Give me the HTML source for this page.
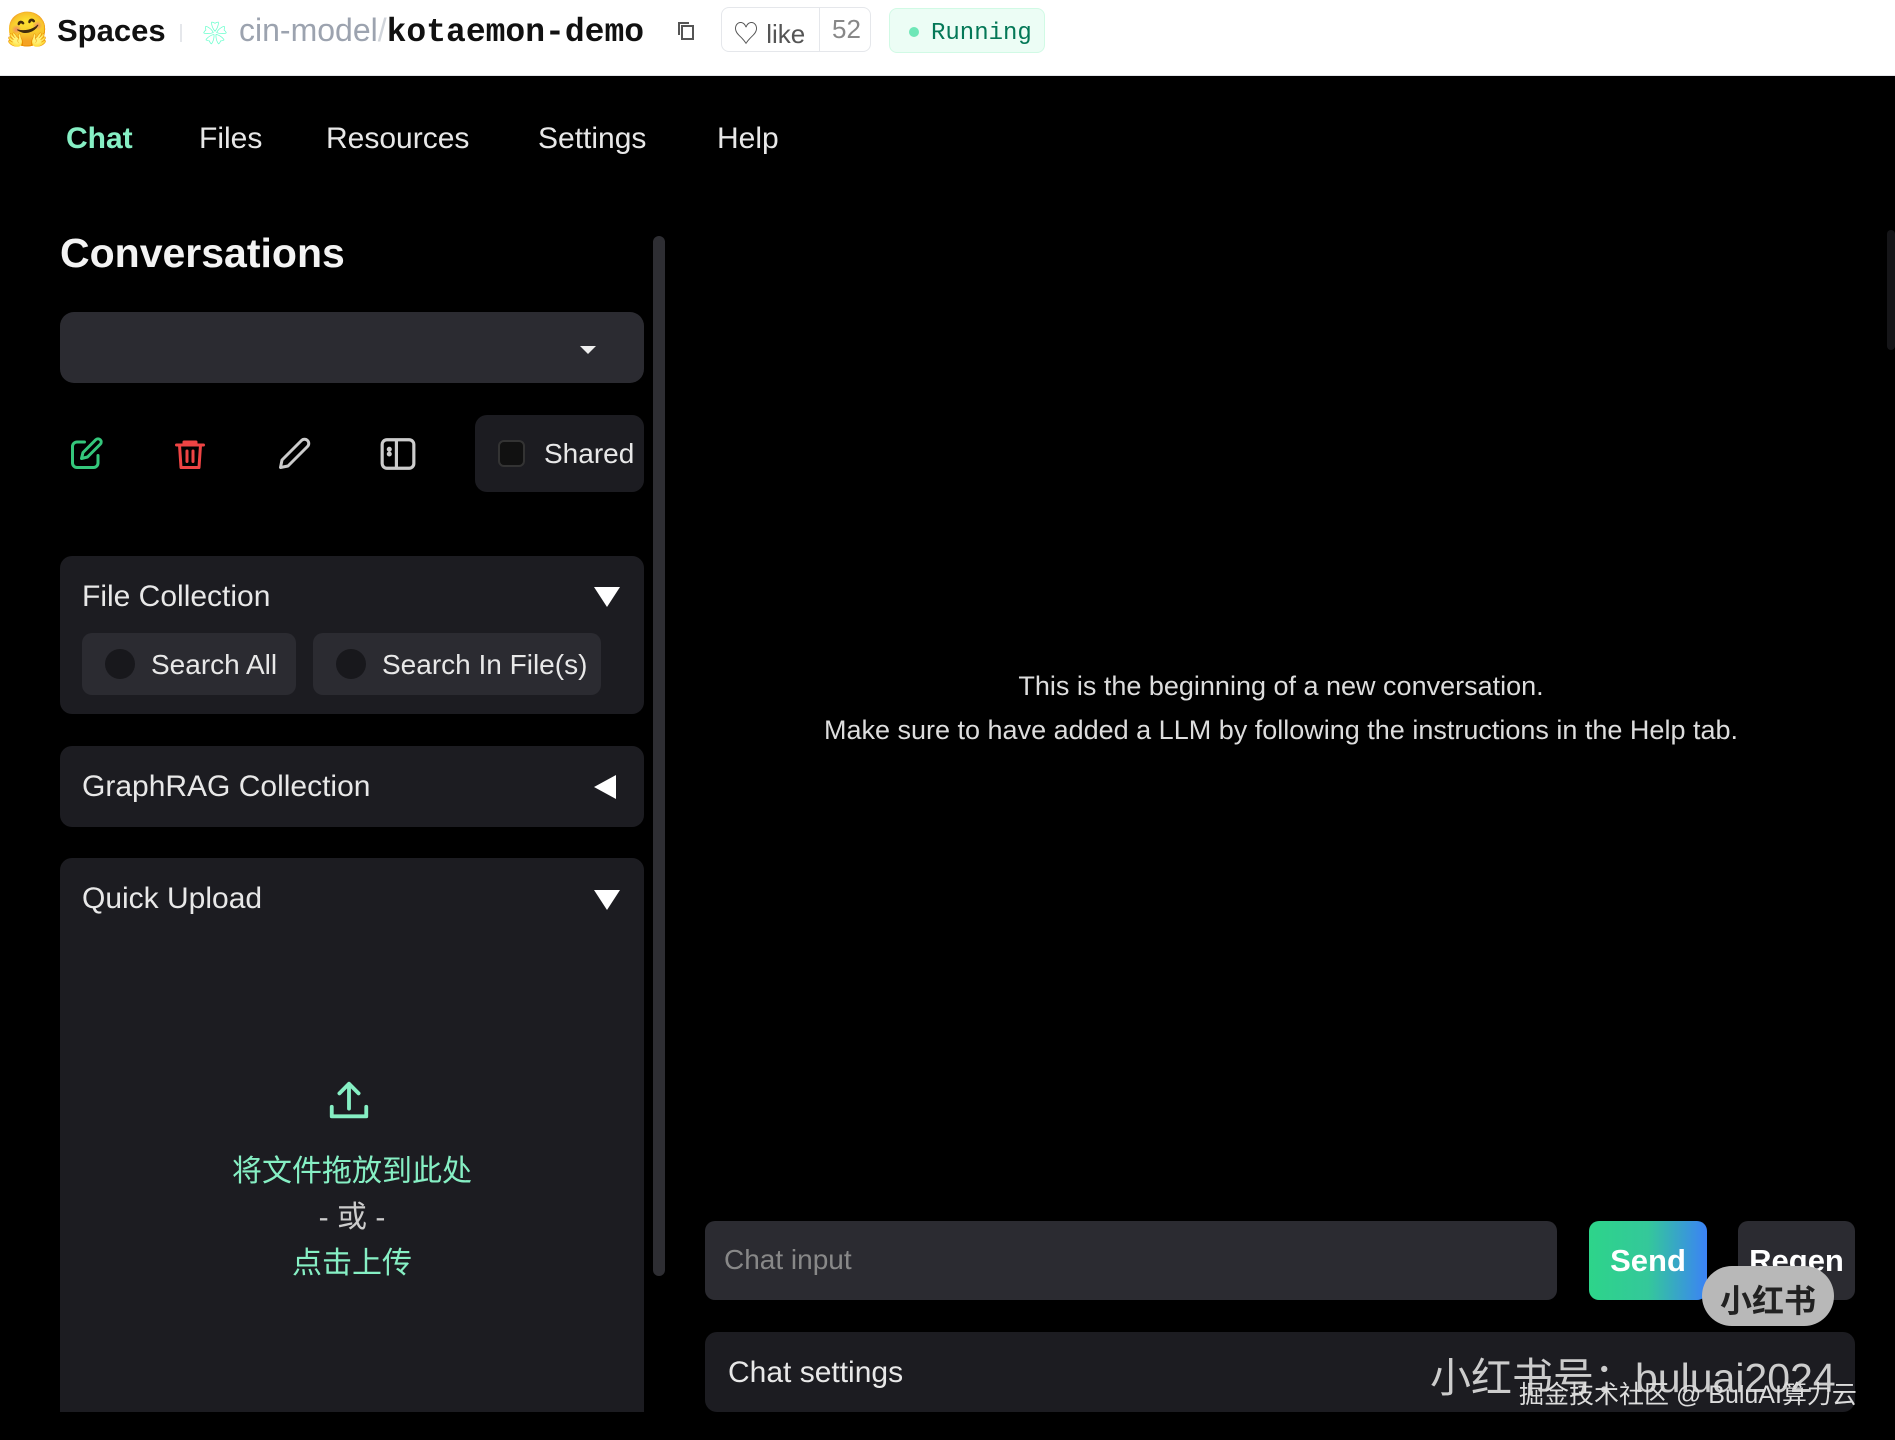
<!DOCTYPE html>
<html><head><meta charset="utf-8"><style>
*{box-sizing:border-box;margin:0;padding:0}
body{width:1895px;height:1440px;background:#000;font-family:"Liberation Sans","Noto Sans CJK SC",sans-serif;color:#e8e8e8;position:relative;overflow:hidden}
.a{position:absolute}
.hdr{left:0;top:0;width:1895px;height:76px;background:#fff;border-bottom:1px solid #e5e7eb}
.t{white-space:nowrap}
.panel{background:#1c1c21;border-radius:12px}
.btn2{background:#2b2b31;border-radius:10px}
</style></head><body>
<div class="a hdr">
  <div class="a t" style="left:6px;top:10px;font-size:34px">🤗</div>
  <div class="a t" style="left:57px;top:13px;font-size:31px;font-weight:bold;color:#111">Spaces</div>
  <div class="a" style="left:180px;top:24px;width:2px;height:18px;background:#e5e7eb"></div>
  <div class="a t" style="left:203px;top:14px;font-size:24px;color:#6fc">❀</div>
  <div class="a t" style="left:239px;top:12px;font-size:32px;color:#9ca3af">cin-model<span style="color:#d1d5db">/</span><span style="font-family:'Liberation Mono',monospace;font-weight:bold;color:#111;font-size:33px">kotaemon-demo</span></div>
  <svg class="a" style="left:676px;top:20px" width="20" height="22" viewBox="0 0 20 22" fill="none" stroke="#555" stroke-width="2"><rect x="6" y="6" width="11" height="13"/><path d="M3 15V3h10"/></svg>
  <div class="a" style="left:721px;top:7px;width:150px;height:45px;border:1px solid #e5e7eb;border-radius:8px"></div>
  <div class="a" style="left:819px;top:7px;width:1px;height:45px;background:#e5e7eb"></div>
  <div class="a t" style="left:733px;top:14px;font-size:26px;color:#555">♡ like</div>
  <div class="a t" style="left:832px;top:14px;font-size:26px;color:#888">52</div>
  <div class="a" style="left:889px;top:8px;width:156px;height:45px;background:#ecfdf5;border:1px solid #d1fae5;border-radius:8px"></div>
  <div class="a" style="left:909px;top:27px;width:10px;height:10px;border-radius:5px;background:#6ee7b7"></div>
  <div class="a t" style="left:931px;top:20px;font-size:24px;font-family:'Liberation Mono',monospace;color:#047857">Running</div>
</div>

<div class="a t" style="left:66px;top:122px;font-size:30px;color:#86efc4;font-weight:bold">Chat</div>
<div class="a t" style="left:199px;top:122px;font-size:30px">Files</div>
<div class="a t" style="left:326px;top:122px;font-size:30px">Resources</div>
<div class="a t" style="left:538px;top:122px;font-size:30px">Settings</div>
<div class="a t" style="left:717px;top:122px;font-size:30px">Help</div>

<div class="a t" style="left:60px;top:230px;font-size:41px;font-weight:bold;color:#f3f3f3">Conversations</div>
<div class="a btn2" style="left:60px;top:312px;width:584px;height:71px;border-radius:14px"></div>
<div class="a" style="left:580px;top:346px;width:0;height:0;border-left:8px solid transparent;border-right:8px solid transparent;border-top:8px solid #eee"></div>
<div class="a" style="left:653px;top:236px;width:12px;height:1040px;background:#2e2e33;border-radius:6px"></div>

<svg class="a" style="left:68px;top:436px" width="36" height="36" viewBox="0 0 24 24" fill="none" stroke="#34c77b" stroke-width="2" stroke-linecap="round" stroke-linejoin="round"><path d="M11 4H6a3 3 0 0 0-3 3v11a3 3 0 0 0 3 3h11a3 3 0 0 0 3-3v-5"/><path d="M18.5 2.5a2.1 2.1 0 0 1 3 3L13 14l-4 1 1-4z"/></svg>
<svg class="a" style="left:172px;top:435px" width="36" height="38" viewBox="0 0 24 24" fill="none" stroke="#ef4444" stroke-width="2" stroke-linecap="round" stroke-linejoin="round"><path d="M3 6h18M8 6V4h8v2M5 6l1 15h12l1-15M10 10v7M14 10v7"/></svg>
<svg class="a" style="left:276px;top:436px" width="36" height="36" viewBox="0 0 24 24" fill="none" stroke="#ccc" stroke-width="2" stroke-linecap="round" stroke-linejoin="round"><path d="M17 3a2.8 2.8 0 0 1 4 4L8 20l-5 1 1-5z"/></svg>
<svg class="a" style="left:379px;top:436px" width="38" height="36" viewBox="0 0 24 22" fill="none" stroke="#ccc" stroke-width="2"><rect x="2" y="2" width="20" height="18" rx="3"/><path d="M11 2v18"/><circle cx="6.5" cy="8" r=".6" fill="#ccc"/><circle cx="6.5" cy="11" r=".6" fill="#ccc"/></svg>
<div class="a btn2" style="left:475px;top:415px;width:169px;height:77px;background:#1c1c21;border-radius:12px"></div>
<div class="a" style="left:498px;top:440px;width:27px;height:27px;border:2px solid #333;border-radius:6px;background:#111"></div>
<div class="a t" style="left:544px;top:438px;font-size:28px">Shared</div>

<div class="a panel" style="left:60px;top:556px;width:584px;height:158px"></div>
<div class="a t" style="left:82px;top:580px;font-size:30px">File Collection</div>
<div class="a" style="left:594px;top:587px;border-left:13px solid transparent;border-right:13px solid transparent;border-top:20px solid #fff"></div>
<div class="a btn2" style="left:82px;top:633px;width:214px;height:62px"></div>
<div class="a" style="left:105px;top:649px;width:30px;height:30px;border-radius:15px;background:#18181c"></div>
<div class="a t" style="left:151px;top:649px;font-size:28px">Search All</div>
<div class="a btn2" style="left:313px;top:633px;width:288px;height:62px"></div>
<div class="a" style="left:336px;top:649px;width:30px;height:30px;border-radius:15px;background:#18181c"></div>
<div class="a t" style="left:382px;top:649px;font-size:28px">Search In File(s)</div>

<div class="a panel" style="left:60px;top:746px;width:584px;height:81px"></div>
<div class="a t" style="left:82px;top:770px;font-size:30px">GraphRAG Collection</div>
<div class="a" style="left:594px;top:775px;border-top:12px solid transparent;border-bottom:12px solid transparent;border-right:22px solid #fff"></div>

<div class="a panel" style="left:60px;top:858px;width:584px;height:554px;border-radius:12px 12px 0 0"></div>
<div class="a t" style="left:82px;top:882px;font-size:30px">Quick Upload</div>
<div class="a" style="left:594px;top:890px;border-left:13px solid transparent;border-right:13px solid transparent;border-top:20px solid #fff"></div>
<svg class="a" style="left:326px;top:1078px" width="46" height="46" viewBox="0 0 24 24" fill="none" stroke="#86efc4" stroke-width="2" stroke-linecap="round" stroke-linejoin="round"><path d="M12 16V3M7 8l5-5 5 5M3 15v5h18v-5"/></svg>
<div class="a t" style="left:60px;width:584px;text-align:center;top:1146px;font-size:30px;color:#86efc4">将文件拖放到此处</div>
<div class="a t" style="left:60px;width:584px;text-align:center;top:1192px;font-size:30px;color:#ccc">- 或 -</div>
<div class="a t" style="left:60px;width:584px;text-align:center;top:1238px;font-size:30px;color:#86efc4">点击上传</div>

<div class="a" style="left:1887px;top:230px;width:8px;height:120px;background:#151518;border-radius:4px"></div>
<div class="a t" style="left:705px;width:1152px;text-align:center;top:671px;font-size:27px;color:#ddd">This is the beginning of a new conversation.</div>
<div class="a t" style="left:705px;width:1152px;text-align:center;top:715px;font-size:27px;color:#ddd">Make sure to have added a LLM by following the instructions in the Help tab.</div>

<div class="a btn2" style="left:705px;top:1221px;width:852px;height:79px"></div>
<div class="a t" style="left:724px;top:1244px;font-size:28px;color:#888">Chat input</div>
<div class="a" style="left:1589px;top:1221px;width:118px;height:79px;border-radius:10px;background:linear-gradient(90deg,#2dd48a 0%,#34c89a 50%,#3b82f6 100%)"></div>
<div class="a t" style="left:1589px;width:118px;text-align:center;top:1243px;font-size:31px;font-weight:bold;color:#fff">Send</div>
<div class="a btn2" style="left:1738px;top:1221px;width:117px;height:79px"></div>
<div class="a t" style="left:1738px;width:117px;text-align:center;top:1243px;font-size:31px;font-weight:bold;color:#fff">Regen</div>
<div class="a" style="left:1702px;top:1266px;width:132px;height:60px;border-radius:30px;background:#b8b8b8"></div>
<div class="a t" style="left:1702px;width:132px;text-align:center;top:1276px;font-size:32px;font-weight:bold;color:#222">小红书</div>

<div class="a panel" style="left:705px;top:1332px;width:1150px;height:80px"></div>
<div class="a t" style="left:728px;top:1356px;font-size:30px">Chat settings</div>
<div class="a t" style="left:1430px;top:1344px;font-size:41px;color:#ccc">小红书号：buluai2024</div>
<div class="a t" style="left:1519px;top:1375px;font-size:25px;color:#ddd">掘金技术社区 @ BuluAI算力云</div>
</body></html>
